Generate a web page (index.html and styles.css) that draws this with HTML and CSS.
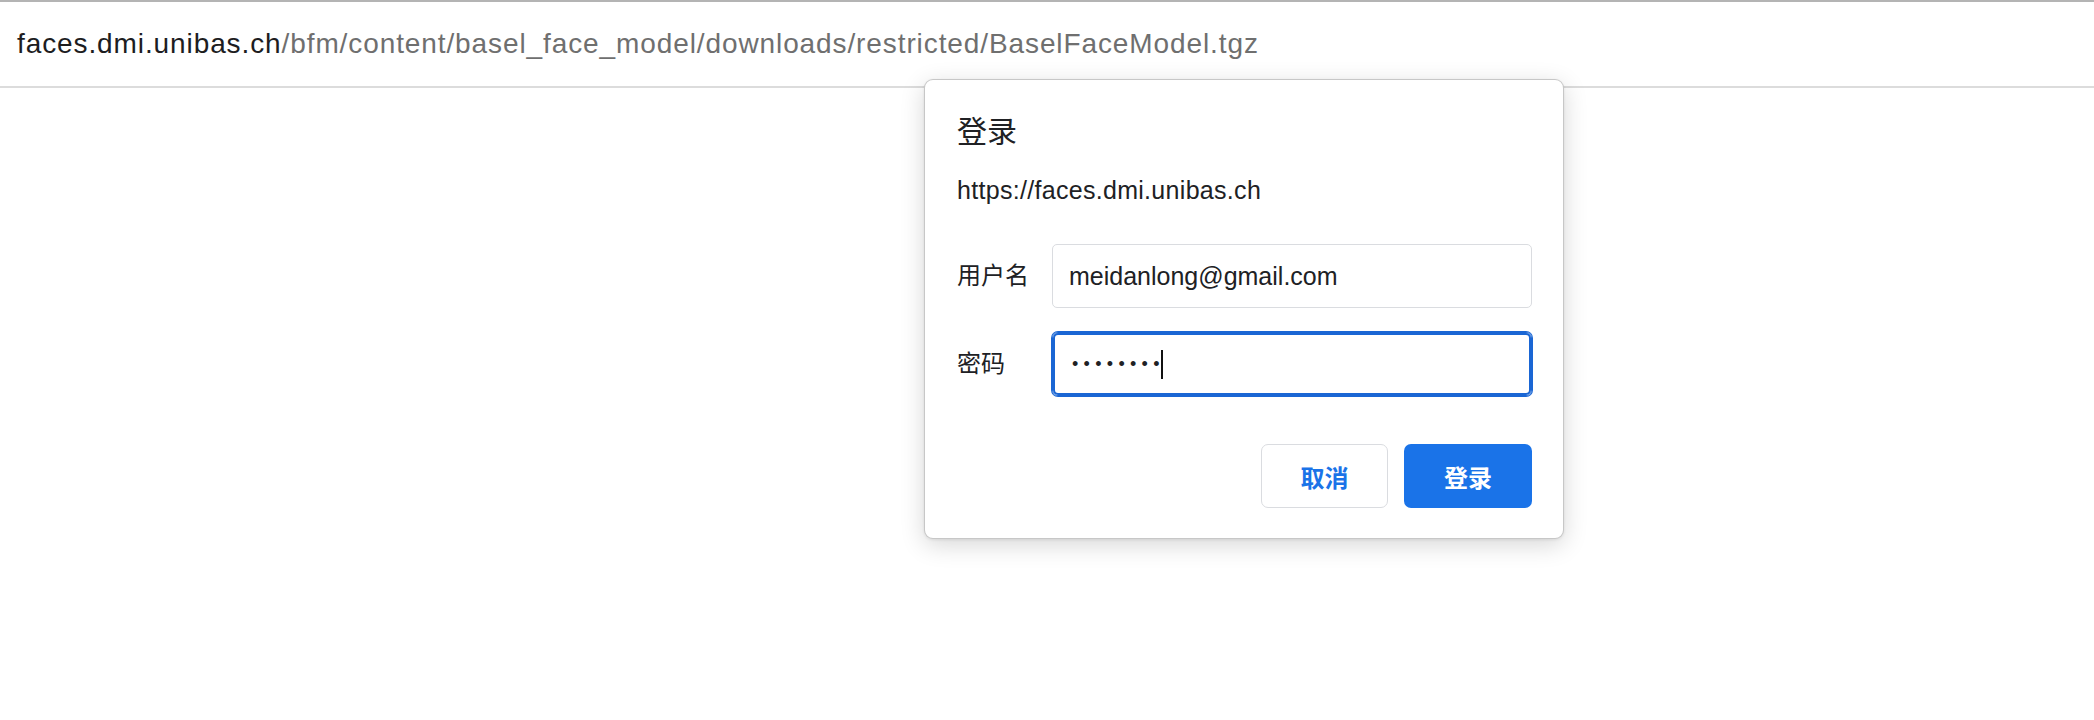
FILE: index.html
```html
<!DOCTYPE html>
<html lang="zh-CN">
<head>
<meta charset="utf-8">
<title>登录</title>
<link rel="stylesheet" href="styles.css">
</head>
<body>
<div class="urlbar"><span class="host">faces.dmi.unibas.ch</span><span class="path">/bfm/content/basel_face_model/downloads/restricted/BaselFaceModel.tgz</span></div>
<div class="dialog">
  <div class="title">登录</div>
  <div class="origin">https://faces.dmi.unibas.ch</div>
  <div class="row first">
    <div class="label">用户名</div>
    <div class="field"><span class="value">meidanlong@gmail.com</span></div>
  </div>
  <div class="row second">
    <div class="label">密码</div>
    <div class="field focused"><span class="dots">••••••••</span><span class="caret"></span></div>
  </div>
  <div class="actions">
    <div class="btn cancel">取消</div>
    <div class="btn primary">登录</div>
  </div>
</div>
</body>
</html>
```
FILE: styles.css
```css
html, body {
  margin: 0;
  padding: 0;
  background: #ffffff;
}
body {
  font-family: "Liberation Sans", "Noto Sans CJK SC", sans-serif;
  color: #202124;
  width: 2094px;
  height: 720px;
  overflow: hidden;
  position: relative;
}
.urlbar {
  border-top: 2px solid #b4b4b4;
  border-bottom: 2px solid #dcdcdc;
  height: 84px;
  line-height: 84px;
  padding-left: 17px;
  font-size: 28px;
  letter-spacing: 0.9px;
  white-space: nowrap;
}
.host { color: #1d1d1f; }
.path { color: #6f6f6f; }

.dialog {
  position: absolute;
  left: 924px;
  top: 79px;
  width: 640px;
  height: 460px;
  box-sizing: border-box;
  background: #fff;
  border: 1px solid rgba(0, 0, 0, 0.22);
  border-radius: 9px;
  box-shadow: 0 6px 24px rgba(0, 0, 0, 0.16), 0 1px 3px rgba(0, 0, 0, 0.08);
  padding: 34px 31px 30px 32px;
  display: flex;
  flex-direction: column;
}
.title {
  font-size: 30px;
  line-height: 36px;
  height: 36px;
}
.origin {
  margin-top: 25px;
  font-size: 25px;
  line-height: 30px;
  letter-spacing: 0.3px;
}
.row {
  display: flex;
  align-items: center;
  height: 64px;
}
.row.first { margin-top: 39px; }
.row.second { margin-top: 24px; }
.label {
  width: 95px;
  flex: none;
  font-size: 24px;
  line-height: 30px;
}
.field {
  width: 480px;
  height: 64px;
  box-sizing: border-box;
  border: 1px solid #dadce0;
  border-radius: 5px;
  padding-left: 16px;
  display: flex;
  align-items: center;
  font-size: 25px;
  line-height: 30px;
}
.field.focused {
  border-color: #1a66d4;
  box-shadow: 0 0 0 1px #1a66d4, inset 0 0 0 2px #1a66d4;
  border-radius: 6px;
}
.value { color: #202124; }
.dots {
  font-size: 18px;
  letter-spacing: 5.3px;
  color: #202124;
  padding-left: 3px;
}
.caret {
  display: inline-block;
  width: 2px;
  height: 29px;
  background: #111;
  margin-left: -4px;
}
.actions {
  margin-top: 48px;
  display: flex;
  justify-content: flex-end;
  gap: 16px;
}
.btn {
  height: 64px;
  box-sizing: border-box;
  border-radius: 7px;
  display: flex;
  align-items: center;
  justify-content: center;
  font-size: 24px;
  font-weight: bold;
}
.btn.cancel {
  width: 127px;
  border: 1px solid #dadce0;
  color: #1a73e8;
  background: #fff;
}
.btn.primary {
  width: 128px;
  background: #1a73e8;
  color: #fff;
}
```
